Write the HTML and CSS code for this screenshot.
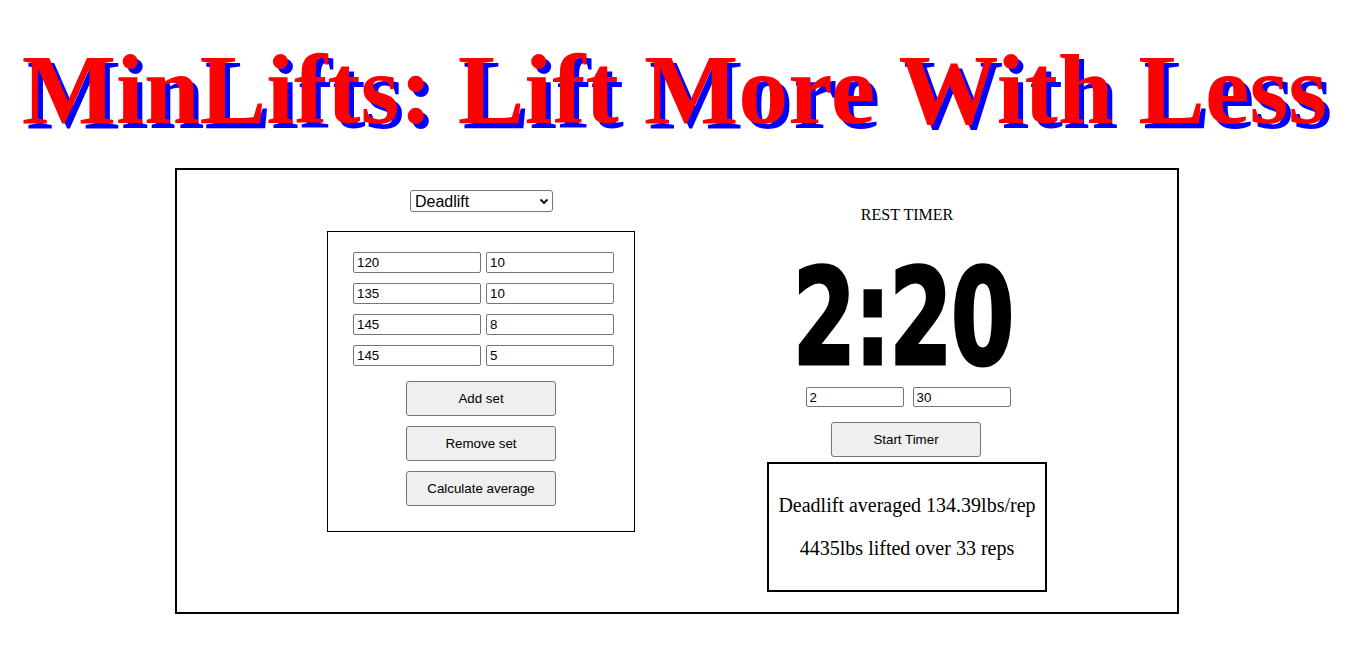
FILE: index.html
```html
<!DOCTYPE html>
<html>
<head>
<meta charset="utf-8">
<title>MinLifts</title>
<link rel="stylesheet" href="styles.css">
</head>
<body>
<h1 class="title">MinLifts: Lift More With Less</h1>
<main class="app">
  <section class="lifts">
    <div class="select-wrap">
      <select class="lift-select">
        <option>Deadlift</option>
        <option>Squat</option>
        <option>Bench Press</option>
      </select>
      <svg class="chevron" width="10" height="7" viewBox="0 0 10 7"><path d="M1.5 1.5 L5 5 L8.5 1.5" fill="none" stroke="#000" stroke-width="1.8"/></svg>
    </div>
    <div class="sets">
      <div class="set-row"><input class="field" value="120"><input class="field" value="10"></div>
      <div class="set-row"><input class="field" value="135"><input class="field" value="10"></div>
      <div class="set-row"><input class="field" value="145"><input class="field" value="8"></div>
      <div class="set-row"><input class="field" value="145"><input class="field" value="5"></div>
      <div class="buttons">
        <button class="btn">Add set</button>
        <button class="btn">Remove set</button>
        <button class="btn">Calculate average</button>
      </div>
    </div>
  </section>
  <section class="timer-col">
    <div class="timer-label">REST TIMER</div>
    <div class="timer-display"><span class="digits">2:20</span></div>
    <div class="timer-inputs"><input class="field small" value="2"><input class="field small" value="30"></div>
    <button class="btn start">Start Timer</button>
    <div class="result">
      <p>Deadlift averaged 134.39lbs/rep</p>
      <p>4435lbs lifted over 33 reps</p>
    </div>
  </section>
</main>
</body>
</html>
```

FILE: styles.css
```css
html, body {
  margin: 0;
  padding: 0;
  background: #fff;
}
body {
  padding: 8px;
  font-family: "Liberation Serif", "Times New Roman", serif;
  color: #000;
}
.title {
  margin: 26px 0 23px;
  text-align: center;
  font-family: "Liberation Serif", "Times New Roman", serif;
  font-weight: bold;
  font-size: 100px;
  line-height: 111px;
  height: 111px;
  color: #ff0000;
  text-shadow: 5px 5px 0 #0000ff;
  white-space: nowrap;
  padding-left: 3px;
}
.app {
  margin-left: 167px;
  width: 850px;
  height: 442px;
  border: 2px solid #000;
  display: flex;
  align-items: flex-start;
  padding-left: 150px;
  gap: 132px;
  box-sizing: content-box;
}
.lifts {
  width: 308px;
  padding-top: 20px;
  display: flex;
  flex-direction: column;
  align-items: center;
}
.select-wrap {
  position: relative;
  width: 143px;
  height: 22px;
  margin-left: 1px;
}
.lift-select {
  appearance: none;
  -webkit-appearance: none;
  width: 143px;
  height: 22px;
  box-sizing: border-box;
  border: 1px solid #767676;
  border-radius: 3px;
  background: #fff;
  font-family: "Liberation Sans", Arial, sans-serif;
  font-size: 16px;
  padding: 0 0 0 4px;
  color: #000;
}
.chevron {
  position: absolute;
  right: 4px;
  top: 8px;
  pointer-events: none;
}
.sets {
  margin-top: 19px;
  width: 308px;
  height: 301px;
  box-sizing: border-box;
  border: 1px solid #000;
  padding: 20px 0 0 25px;
  display: flex;
  flex-direction: column;
  gap: 10px;
}
.set-row {
  display: flex;
  gap: 5px;
}
.field {
  width: 128px;
  height: 21px;
  box-sizing: border-box;
  border: 1px solid #767676;
  border-radius: 2px;
  padding: 1px 3px;
  font-family: "Liberation Sans", Arial, sans-serif;
  font-size: 13.33px;
  color: #000;
  background: #fff;
  margin: 0;
}
.field.small {
  width: 98px;
  height: 20px;
}
.buttons {
  margin-top: 5px;
  width: 256px;
  display: flex;
  flex-direction: column;
  align-items: center;
  gap: 10px;
}
.btn {
  width: 150px;
  height: 35px;
  box-sizing: border-box;
  background: #efefef;
  border: 1px solid #767676;
  border-radius: 3px;
  font-family: "Liberation Sans", Arial, sans-serif;
  font-size: 13.33px;
  color: #000;
  padding: 0;
  margin: 0;
}
.timer-col {
  width: 280px;
  padding-top: 36px;
  display: flex;
  flex-direction: column;
  align-items: center;
}
.timer-label {
  font-size: 16px;
  line-height: 18px;
  height: 18px;
}
.timer-display {
  height: 163px;
  box-sizing: border-box;
  padding-top: 28px;
  padding-right: 8px;
  width: 280px;
  display: flex;
  justify-content: center;
  align-items: flex-start;
}
.digits {
  display: inline-block;
  font-family: "DejaVu Sans Condensed", "DejaVu Sans", sans-serif;
  font-stretch: condensed;
  font-weight: bold;
  font-size: 133px;
  line-height: 133px;
  height: 133px;
  transform: scaleX(0.76);
  -webkit-text-stroke: 3px #000;
  letter-spacing: -2px;
}
.timer-inputs {
  display: flex;
  gap: 9px;
  margin-left: 2px;
}
.btn.start {
  margin-top: 15px;
  margin-right: 2px;
}
.result {
  margin-top: 5px;
  width: 280px;
  height: 130px;
  box-sizing: border-box;
  border: 2px solid #000;
  padding: 10px 0;
  text-align: center;
  font-size: 20px;
  line-height: 23px;
}
.result p {
  margin: 20px 0;
}
```
